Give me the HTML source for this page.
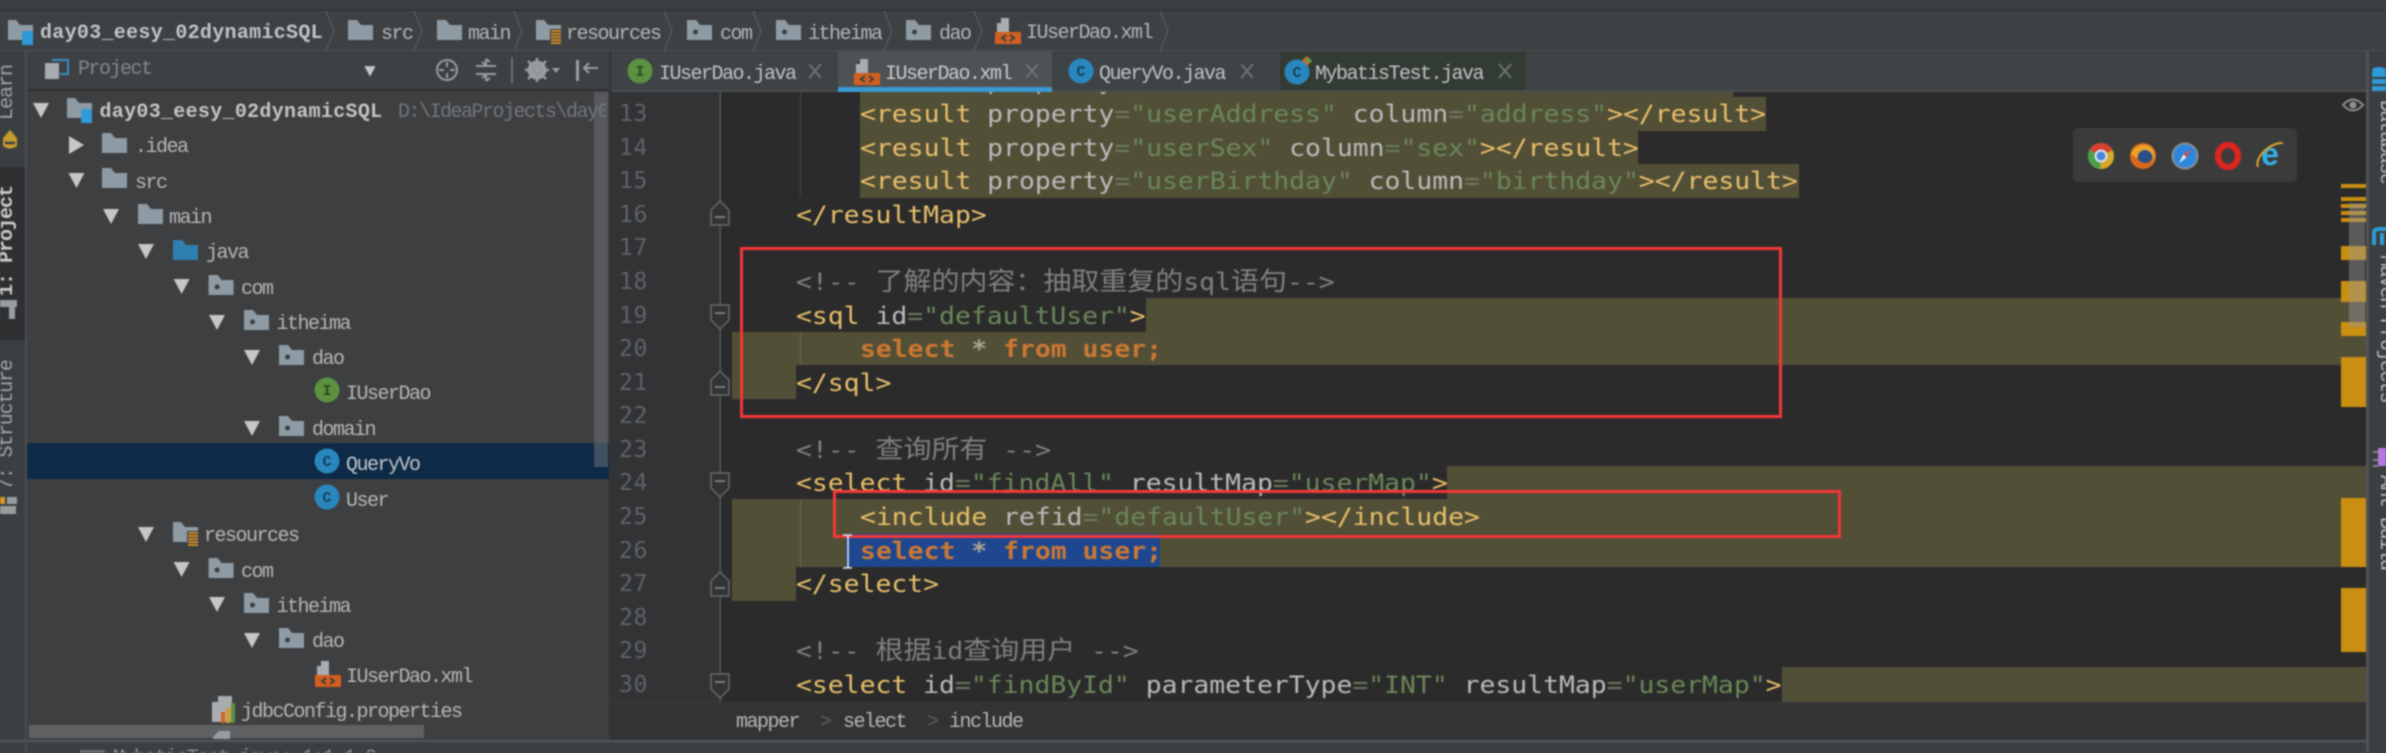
<!DOCTYPE html>
<html><head><meta charset="utf-8"><title>IUserDao.xml</title>
<style>
html,body{margin:0;padding:0;background:#3c3f41;width:2386px;height:753px;overflow:hidden}
#r{position:absolute;left:0;top:0;width:2386px;height:753px;overflow:hidden;filter:blur(.7px);background:#3c3f41}
.b{position:absolute}
.x{position:absolute;white-space:pre;font-family:"Liberation Mono",monospace;font-size:20px;letter-spacing:-1.5px;color:#b4b6b8;line-height:24px;height:24px;margin-top:1.5px}
.bd{font-weight:bold;letter-spacing:.3px;color:#c2c4c6}
.l{position:absolute;white-space:pre;font-family:"DejaVu Sans Mono",monospace;font-size:24px;line-height:33.56px;height:33.56px;transform:scaleX(1.1);transform-origin:0 0;color:#bababa;margin-top:1.5px}
.n{position:absolute;left:619px;width:32px;font-family:"DejaVu Sans Mono",monospace;font-size:23px;letter-spacing:.6px;line-height:33.56px;color:#606366;transform-origin:0 0;margin-top:1.5px}
.t{color:#e8bf6a}.a{color:#bababa}.v{color:#6a8759}.q{color:#6a7a5f}.c{color:#808080}
.k{color:#cc7832;font-weight:bold}.s{color:#a9a58c;font-weight:bold}
.z{font-family:"Noto Sans CJK SC","Liberation Sans",sans-serif;font-size:25.45px;color:#808080;line-height:0}
.h{position:absolute;background:#524f37}
.m{position:absolute;left:2341px;width:25px;background:#c98f11}
.rr{position:absolute;border:3px solid #f73636;box-sizing:border-box}
.v90{position:absolute;white-space:pre;font-family:"Liberation Mono",monospace;font-size:20px;color:#b8babc;transform-origin:0 0}
</style></head><body><div id="r">

<!-- top strips -->
<div class="b" style="left:0;top:0;width:2386px;height:9px;background:#3c3f41"></div>
<div class="b" style="left:0;top:9px;width:2386px;height:2px;background:#333638"></div>
<div class="b" style="left:0;top:11px;width:2386px;height:39px;background:#3d4143"></div>
<div class="b" style="left:0;top:50px;width:2386px;height:1px;background:#4c4f51"></div>

<!-- left strip -->
<div class="b" style="left:0;top:51px;width:25px;height:689px;background:#3c3f41"></div>
<div class="b" style="left:25px;top:51px;width:2px;height:702px;background:#4a4d4f"></div>
<div class="b" style="left:0;top:167px;width:25px;height:173px;background:#2e3032"></div>

<!-- project panel -->
<div class="b" style="left:27px;top:51px;width:583px;height:39px;background:#3e4143"></div>
<div class="b" style="left:27px;top:89px;width:583px;height:2px;background:#303234"></div>
<div class="b" style="left:27px;top:91px;width:583px;height:649px;background:#3d3f41"></div>
<div class="b" style="left:27px;top:443px;width:583px;height:36px;background:#0d2a47"></div>
<div class="b" style="left:594px;top:92px;width:14px;height:375px;background:rgba(110,112,114,.55)"></div>
<div class="x" style="left:78px;top:56px;color:#85888a">Project</div>

<!-- tree text -->
<div class="x bd" style="left:99.5px;top:99px">day03_eesy_02dynamicSQL</div>
<div class="x" style="left:398px;top:99px;color:#74777a;width:208px;overflow:hidden">D:\IdeaProjects\day03_eesy</div>
<div class="x" style="left:135px;top:134px">.idea</div>
<div class="x" style="left:135px;top:170px">src</div>
<div class="x" style="left:169px;top:205px">main</div>
<div class="x" style="left:206px;top:240px">java</div>
<div class="x" style="left:241px;top:276px">com</div>
<div class="x" style="left:276.5px;top:311px">itheima</div>
<div class="x" style="left:312px;top:346px">dao</div>
<div class="x" style="left:346px;top:381px">IUserDao</div>
<div class="x" style="left:312px;top:417px">domain</div>
<div class="x" style="left:346px;top:452px;color:#c4c6c8">QueryVo</div>
<div class="x" style="left:346px;top:488px">User</div>
<div class="x" style="left:204px;top:523px">resources</div>
<div class="x" style="left:241px;top:559px">com</div>
<div class="x" style="left:276.5px;top:594px">itheima</div>
<div class="x" style="left:312px;top:629px">dao</div>
<div class="x" style="left:346px;top:664px">IUserDao.xml</div>
<div class="x" style="left:241px;top:699px">jdbcConfig.properties</div>

<!-- editor -->
<div class="b" style="left:610px;top:92px;width:1756px;height:610px;background:#2b2b2b"></div>
<div class="b" style="left:610px;top:92px;width:110px;height:610px;background:#313335"></div>
<div class="b" style="left:609px;top:51px;width:2px;height:702px;background:#323436"></div>

<!-- highlights -->
<div class="h" style="left:860px;top:92px;width:873px;height:5px"></div>
<div class="h" style="left:860px;top:97px;width:906px;height:33.5px"></div>
<div class="h" style="left:860px;top:130.3px;width:778px;height:33.7px"></div>
<div class="h" style="left:860px;top:163.8px;width:939px;height:33.8px"></div>
<div class="h" style="left:1146px;top:298px;width:1220px;height:34px"></div>
<div class="h" style="left:732px;top:331.6px;width:1634px;height:33.7px"></div>
<div class="h" style="left:732px;top:365.2px;width:64px;height:33.7px"></div>
<div class="h" style="left:1447px;top:466px;width:919px;height:34px"></div>
<div class="h" style="left:732px;top:499.4px;width:1634px;height:67.4px"></div>
<div class="h" style="left:732px;top:566.6px;width:64px;height:34px"></div>
<div class="h" style="left:1782px;top:667.4px;width:584px;height:34.4px"></div>
<div class="b" style="left:846px;top:534px;width:314px;height:33px;background:#1e4790"></div>
<div class="b" style="left:800px;top:92px;width:1px;height:106px;background:#44443c"></div>
<div class="b" style="left:800px;top:332px;width:1px;height:33px;background:#6a684e"></div>
<div class="b" style="left:800px;top:500px;width:1px;height:67px;background:#6a684e"></div>

<!-- code -->
<div class="l" style="left:860px;top:63.1px"><span class="t">&lt;result</span> property<span class="q">=</span><span class="v">"userName"</span> column<span class="q">=</span><span class="v">"username"</span><span class="t">&gt;&lt;/result&gt;</span></div>
<div class="b" style="left:612px;top:51px;width:1754px;height:41px;background:#3e4345"></div>
<div class="l" style="left:860px;top:96.7px"><span class="t">&lt;result</span> property<span class="q">=</span><span class="v">"userAddress"</span> column<span class="q">=</span><span class="v">"address"</span><span class="t">&gt;&lt;/result&gt;</span></div>
<div class="l" style="left:860px;top:130.3px"><span class="t">&lt;result</span> property<span class="q">=</span><span class="v">"userSex"</span> column<span class="q">=</span><span class="v">"sex"</span><span class="t">&gt;&lt;/result&gt;</span></div>
<div class="l" style="left:860px;top:163.8px"><span class="t">&lt;result</span> property<span class="q">=</span><span class="v">"userBirthday"</span> column<span class="q">=</span><span class="v">"birthday"</span><span class="t">&gt;&lt;/result&gt;</span></div>
<div class="l" style="left:796px;top:197.4px"><span class="t">&lt;/resultMap&gt;</span></div>
<div class="l c" style="left:796px;top:264.5px">&lt;!-- <span class="z">了解的内容：抽取重复的</span>sql<span class="z">语句</span>--&gt;</div>
<div class="l" style="left:796px;top:298.1px"><span class="t">&lt;sql</span> id<span class="q">=</span><span class="v">"defaultUser"</span><span class="t">&gt;</span></div>
<div class="l" style="left:860px;top:331.6px"><span class="k">select</span> <span class="s">*</span> <span class="k">from user;</span></div>
<div class="l" style="left:796px;top:365.2px"><span class="t">&lt;/sql&gt;</span></div>
<div class="l c" style="left:796px;top:432.3px">&lt;!-- <span class="z">查询所有</span> --&gt;</div>
<div class="l" style="left:796px;top:465.9px"><span class="t">&lt;select</span> id<span class="q">=</span><span class="v">"findAll"</span> resultMap<span class="q">=</span><span class="v">"userMap"</span><span class="t">&gt;</span></div>
<div class="l" style="left:860px;top:499.4px"><span class="t">&lt;include</span> refid<span class="q">=</span><span class="v">"defaultUser"</span><span class="t">&gt;&lt;/include&gt;</span></div>
<div class="l" style="left:860px;top:533px"><span class="k">select</span> <span class="s">*</span> <span class="k">from user;</span></div>
<div class="l" style="left:796px;top:566.5px"><span class="t">&lt;/select&gt;</span></div>
<div class="l c" style="left:796px;top:633.7px">&lt;!-- <span class="z">根据</span>id<span class="z">查询用户</span> --&gt;</div>
<div class="l" style="left:796px;top:667.2px"><span class="t">&lt;select</span> id<span class="q">=</span><span class="v">"findById"</span> parameterType<span class="q">=</span><span class="v">"INT"</span> resultMap<span class="q">=</span><span class="v">"userMap"</span><span class="t">&gt;</span></div>

<!-- line numbers -->
<div class="n" style="top:96.7px">13</div><div class="n" style="top:130.3px">14</div><div class="n" style="top:163.8px">15</div><div class="n" style="top:197.4px">16</div><div class="n" style="top:230.9px">17</div><div class="n" style="top:264.5px">18</div><div class="n" style="top:298.1px">19</div><div class="n" style="top:331.6px">20</div><div class="n" style="top:365.2px">21</div><div class="n" style="top:398.7px">22</div><div class="n" style="top:432.3px">23</div><div class="n" style="top:465.9px">24</div><div class="n" style="top:499.4px">25</div><div class="n" style="top:533px">26</div><div class="n" style="top:566.5px">27</div><div class="n" style="top:600.1px">28</div><div class="n" style="top:633.7px">29</div><div class="n" style="top:667.2px">30</div>

<!-- editor breadcrumb bar -->
<div class="b" style="left:611px;top:702px;width:1755px;height:38px;background:#313335;border-top:1px solid #3a3c3e;box-sizing:border-box"></div>
<div class="x" style="left:736px;top:709px">mapper</div>
<div class="x" style="left:820px;top:709px;color:#5c5f61">&gt;</div>
<div class="x" style="left:843px;top:709px">select</div>
<div class="x" style="left:927px;top:709px;color:#5c5f61">&gt;</div>
<div class="x" style="left:949px;top:709px">include</div>

<!-- status bar -->
<div class="b" style="left:0;top:740px;width:2386px;height:2px;background:#55585a"></div>
<div class="b" style="left:27px;top:742px;width:2359px;height:11px;background:#3c3f41"></div>
<div class="b" style="left:80px;top:750px;width:25px;height:3px;background:#6a6d6f"></div>
<div class="x" style="left:113px;top:745px;color:#8a8c8e">MybatisTest.java: 1:1 1 2</div>

<!-- tree horizontal scrollbar -->
<div class="b" style="left:29px;top:725px;width:395px;height:13px;background:#5f6163"></div>

<!-- tab bar -->
<div class="b" style="left:612px;top:90px;width:1754px;height:2px;background:#4a4d4f"></div>
<div class="b" style="left:838px;top:51px;width:214px;height:41px;background:#4e5254"></div>
<div class="b" style="left:838px;top:87px;width:214px;height:5px;background:#3a9ad3"></div>
<div class="b" style="left:1280px;top:51px;width:246px;height:39px;background:#323c34"></div>
<div class="x" style="left:659px;top:61px;color:#c0c2c4">IUserDao.java</div>
<div class="x" style="left:885px;top:61px;color:#c8cacc">IUserDao.xml</div>
<div class="x" style="left:1099px;top:61px;color:#c0c2c4">QueryVo.java</div>
<div class="x" style="left:1315px;top:61px;color:#c0c2c4">MybatisTest.java</div>

<!-- nav bar text -->
<div class="x bd" style="left:40px;top:20px">day03_eesy_02dynamicSQL</div>
<div class="x" style="left:381px;top:21px">src</div>
<div class="x" style="left:468px;top:21px">main</div>
<div class="x" style="left:566px;top:21px">resources</div>
<div class="x" style="left:720px;top:21px">com</div>
<div class="x" style="left:808px;top:21px">itheima</div>
<div class="x" style="left:939px;top:21px">dao</div>
<div class="x" style="left:1026px;top:20px">IUserDao.xml</div>

<!-- side strip text -->
<div class="v90" style="left:-4px;top:120px;transform:rotate(-90deg);color:#a0a2a4;letter-spacing:-1px">Learn</div>
<div class="v90" style="left:-4px;top:296px;transform:rotate(-90deg);color:#c8cacc;font-weight:bold;letter-spacing:-1px">1: Project</div>
<div class="v90" style="left:-4px;top:490px;transform:rotate(-90deg);color:#a0a2a4;letter-spacing:-1.2px">7: Structure</div>
<div class="b" style="left:2366px;top:51px;width:20px;height:702px;background:#3c3f41;border-left:3px solid #505355;box-sizing:border-box"></div>
<div class="v90" style="left:2397px;top:100px;transform:rotate(90deg);letter-spacing:-1.6px">Database</div>
<div class="v90" style="left:2397px;top:255px;transform:rotate(90deg);letter-spacing:-1.5px">Maven Projects</div>
<div class="v90" style="left:2397px;top:475px;transform:rotate(90deg);letter-spacing:-1.5px">Ant Build</div>

<!-- overview markers -->
<div class="m" style="top:184px;height:4px"></div>
<div class="m" style="top:197px;height:4px"></div><div class="m" style="top:204px;height:4px"></div><div class="m" style="top:211px;height:4px"></div><div class="m" style="top:218px;height:4px"></div>
<div class="m" style="top:246px;height:14px"></div>
<div class="m" style="top:281px;height:21px"></div>
<div class="m" style="top:322px;height:14px"></div>
<div class="m" style="top:357px;height:50px"></div>
<div class="m" style="top:498px;height:69px"></div>
<div class="m" style="top:588px;height:64px"></div>
<div class="b" style="left:2349px;top:203px;width:16px;height:124px;background:rgba(150,150,150,.45)"></div>

<!-- browser popup -->
<div class="b" style="left:2073px;top:128px;width:224px;height:54px;background:#3b3b3b;border-radius:5px"></div>

<!-- red boxes -->
<div class="rr" style="left:740px;top:247px;width:1042px;height:171px"></div>
<div class="rr" style="left:833px;top:490px;width:1008px;height:48px"></div>

<!-- icons -->
<svg class="b" style="left:0;top:0" width="2386" height="753" viewBox="0 0 2386 753">
<defs>
<g id="f"><path d="M0 0H9L13 5H25V20H0Z" fill="#8f9ba4"/></g>
<g id="fb"><path d="M0 0H9L13 5H25V20H0Z" fill="#2f7fb0"/></g>
<g id="p"><path d="M0 0H9L13 5H25V20H0Z" fill="#8f9ba4"/><circle cx="8.5" cy="12" r="2.5" fill="#3c3f41"/></g>
<g id="mod"><path d="M0 0H8L12 5H25V20H0Z" fill="#8f9ba4"/><rect x="14" y="11" width="11" height="14" fill="#2f9ad8"/></g>
<g id="res"><path d="M0 0H8L12 5H25V20H0Z" fill="#8f9ba4"/><rect x="14" y="9" width="11" height="16" fill="#3c3f41"/><path d="M15 11h10M15 14h10M15 17h10M15 20h10M15 23h10" stroke="#c98a2a" stroke-width="2"/></g>
<g id="dn"><path d="M-8-7H8L0 8Z" fill="#c4c6c8"/></g>
<g id="xml"><path d="M6 0H14V14H2V5Z" fill="#a8adb2"/><path d="M6 0V5H2Z" fill="#3c3f41"/><rect x="0" y="14" width="26" height="12" fill="#d25f1f"/><path d="M11 17l-4 3 4 3M15 17l4 3-4 3" fill="none" stroke="#3c3f41" stroke-width="2"/></g>
<g id="fs"><path d="M-9-11H9V4L0 13L-9 4Z" fill="#313335" stroke="#676a6c" stroke-width="1.5"/><path d="M-5-3H5" stroke="#7a7d7f" stroke-width="2"/></g>
<g id="fe"><path d="M-9 11H9V-4L0-13L-9-4Z" fill="#313335" stroke="#676a6c" stroke-width="1.5"/><path d="M-5 3H5" stroke="#7a7d7f" stroke-width="2"/></g>
<g id="cv"><path d="M0 0L8 20L0 40" fill="none" stroke="#54585a" stroke-width="1.5"/></g>
<g id="x"><path d="M-6-7L6 7M6-7L-6 7" stroke="#6f7274" stroke-width="2"/></g>
</defs>

<!-- nav icons -->
<use href="#mod" x="8" y="20"/><use href="#f" x="348" y="20"/><use href="#f" x="437" y="20"/><use href="#res" x="536" y="20"/>
<use href="#p" x="687" y="20"/><use href="#p" x="776" y="20"/><use href="#p" x="906" y="20"/><use href="#xml" x="995" y="18"/>
<use href="#cv" x="326" y="11"/><use href="#cv" x="414" y="11"/><use href="#cv" x="514" y="11"/><use href="#cv" x="664" y="11"/><use href="#cv" x="753" y="11"/><use href="#cv" x="884" y="11"/><use href="#cv" x="974" y="11"/><use href="#cv" x="1160" y="11"/>

<!-- panel header icons -->
<rect x="45" y="63" width="14" height="16" fill="#a8adb2"/><path d="M52 60H68V74H60" fill="none" stroke="#3d8fc4" stroke-width="2"/>
<use href="#dn" transform="translate(370,71) scale(.7)"/>
<circle cx="447" cy="70" r="10" fill="none" stroke="#9a9d9f" stroke-width="2"/><path d="M447 62v5M447 73v5M439 70h5M450 70h5" stroke="#9a9d9f" stroke-width="2"/>
<path d="M476 66H496M476 74H496M486 59V65l-4-3M486 59l4 3M486 81V75l-4 3M486 81l4-3" fill="none" stroke="#9a9d9f" stroke-width="2"/>
<rect x="511" y="57" width="2" height="26" fill="#6a6d6f"/>
<circle cx="537" cy="70" r="7" fill="none" stroke="#9a9d9f" stroke-width="5"/><path d="M537 58v24M525 70h24M528 61l18 18M546 61l-18 18" stroke="#9a9d9f" stroke-width="2.5"/>
<path d="M552 68h8l-4 5z" fill="#9a9d9f"/>
<rect x="576" y="60" width="3" height="21" fill="#9a9d9f"/><path d="M598 68H584M589 63l-5 5 5 5" fill="none" stroke="#9a9d9f" stroke-width="2"/>

<!-- tree icons -->
<use href="#dn" x="41" y="110"/><use href="#mod" x="67" y="98"/>
<path d="M69 136L84 145L69 154Z" fill="#c4c6c8"/><use href="#f" x="102" y="133"/>
<use href="#dn" x="76.5" y="180"/><use href="#f" x="102" y="168"/>
<use href="#dn" x="111" y="216"/><use href="#f" x="138" y="204"/>
<use href="#dn" x="146" y="251"/><use href="#fb" x="173" y="240"/>
<use href="#dn" x="181.6" y="286"/><use href="#p" x="208.6" y="275"/>
<use href="#dn" x="217" y="322"/><use href="#p" x="244" y="310"/>
<use href="#dn" x="252" y="357"/><use href="#p" x="279" y="345"/>
<use href="#dn" x="252" y="428"/><use href="#p" x="279" y="416"/>
<use href="#dn" x="146" y="534"/><use href="#res" x="173" y="522"/>
<use href="#dn" x="181.6" y="569"/><use href="#p" x="208.6" y="558"/>
<use href="#dn" x="217" y="604"/><use href="#p" x="244" y="593"/>
<use href="#dn" x="252" y="640"/><use href="#p" x="279" y="628"/>
<use href="#xml" x="315" y="661"/>

<g font-family="Liberation Mono,monospace" font-weight="bold" text-anchor="middle" font-size="15">
<circle cx="327" cy="390" r="12.5" fill="#5c9140"/><text x="327" y="395" fill="#2f4a22">I</text>
<circle cx="327" cy="461" r="12.5" fill="#2a87bd"/><text x="327" y="466" fill="#0f3d5c">C</text>
<circle cx="327" cy="497" r="12.5" fill="#2a87bd"/><text x="327" y="502" fill="#14435f">C</text>
<circle cx="640" cy="71" r="12.5" fill="#5c9140"/><text x="640" y="76" fill="#2f4a22">I</text>
<circle cx="1081" cy="71" r="12.5" fill="#2a87bd"/><text x="1081" y="76" fill="#14435f">C</text>
<circle cx="1297" cy="72" r="12.5" fill="#2a87bd"/><text x="1297" y="77" fill="#14435f">C</text>
</g>
<path d="M1302 60l5-4 5 5-5 5z" fill="#d2622a"/><path d="M1305 57l7 3-4 4z" fill="#4fa64a"/>
<use href="#xml" x="854" y="59"/>
<use href="#x" x="815" y="71"/><use href="#x" x="1032" y="71"/><use href="#x" x="1247" y="71"/><use href="#x" x="1505" y="71"/>

<!-- properties icon -->
<path d="M218 696H232V722H212V702Z" fill="#a8adb2"/><path d="M218 696V702H212Z" fill="#3c3f41"/>
<rect x="221" y="712" width="4" height="11" fill="#d2622a"/><rect x="226" y="708" width="4" height="15" fill="#d79a2a"/><rect x="231" y="703" width="4" height="20" fill="#5c9140"/>
<path d="M219 731H230V739H213V737Z" fill="#a8adb2" opacity=".8"/>

<!-- fold gutter -->
<rect x="719.5" y="92" width="1.5" height="610" fill="#55585a"/>
<use href="#fe" x="720" y="214"/><use href="#fs" x="720" y="316"/><use href="#fe" x="720" y="384"/><use href="#fs" x="720" y="484"/><use href="#fe" x="720" y="585"/><use href="#fs" x="720" y="685"/>

<!-- caret -->
<path d="M843 535h4l1 2 1-2h3M848 537V565M843 568h4l1-2 1 2h3" fill="none" stroke="#dfe3ea" stroke-width="1.6"/>

<!-- eye -->
<path d="M2343 105Q2353 94 2363 105Q2353 116 2343 105Z" fill="none" stroke="#8c8e90" stroke-width="2"/><circle cx="2353" cy="105" r="3.5" fill="#8c8e90"/>

<!-- browser icons -->
<g transform="translate(2101,156)"><circle r="13" fill="#d7a92a"/><path d="M0 0L-11.5-6A13 13 0 0 1 11.5-6Z" fill="#d8412f"/><path d="M0 0L-11.5-6A13 13 0 0 0-1 13Z" fill="#4aa04c"/><circle r="6.5" fill="#dbe4ee"/><circle r="4.5" fill="#4a86d8"/></g>
<g transform="translate(2143,156)"><circle r="13" fill="#d8691c"/><circle cx="2" cy="-1" r="8" fill="#2a4f85"/><path d="M-12-2C-8-12 4-14 10-7C12-3 12 4 9 8C12 2 8-6 2-6C-2-6-6-2-5 2C-8 1-10 0-12-2Z" fill="#e9a42a"/></g>
<g transform="translate(2185,156)"><circle r="13.5" fill="#8a8f96"/><circle r="11.5" fill="#2f86dd"/><path d="M6-7L-1.500-1.500L1.500 1.500Z" fill="#e24a3a"/><path d="M-6 7L-1.500-1.500L1.500 1.500Z" fill="#e8eef2"/></g>
<g transform="translate(2228,156)"><ellipse rx="10" ry="11" fill="none" stroke="#d9261f" stroke-width="6.500"/></g>
<g transform="translate(2270,156)"><text x="0" y="9" text-anchor="middle" font-family="Liberation Sans,sans-serif" font-weight="bold" font-size="32" fill="#35b0e6">e</text><path d="M-12 11C-16 2 0-14 13-13" fill="none" stroke="#d8a42a" stroke-width="2"/></g>

<!-- left strip icons -->
<path d="M3 138L10 130L17 138V146Q10 151 3 146Z" fill="#c49a2c"/><path d="M5 143h10" stroke="#3c3f41" stroke-width="2.5"/>
<rect x="0" y="300" width="17" height="7" fill="#9a9d9f"/><rect x="9" y="307" width="6" height="12" fill="#9a9d9f"/>
<rect x="0" y="497" width="5" height="7" fill="#d79a2a"/><path d="M0 506h16v8H0zM7 497h10v7H7z" fill="#9a9d9f"/>

<!-- right strip icons -->
<ellipse cx="2379" cy="70" rx="7" ry="3" fill="#2f9ad8"/><path d="M2372 72h14v5h-14zM2372 79h14v5h-14zM2372 86h14v5h-14z" fill="#2f9ad8"/>
<path d="M2374 245V233Q2374 229 2379 229H2386M2382 233V245" fill="none" stroke="#2f9ad8" stroke-width="4"/>
<path d="M2378 448h8v18h-8z" fill="#b57ae0"/><path d="M2378 452h-5M2378 460h-5M2378 466h-5" stroke="#9a9d9f" stroke-width="1.500"/>
</svg>

</div></body></html>
